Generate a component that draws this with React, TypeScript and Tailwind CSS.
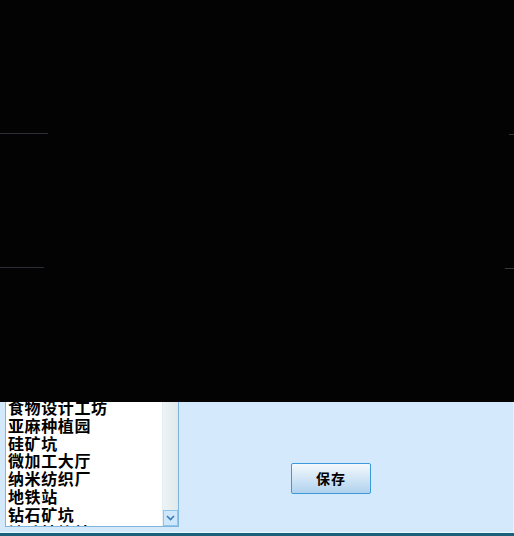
export default function App() {
  const items = [
    "食物设计工坊",
    "亚麻种植园",
    "硅矿坑",
    "微加工大厅",
    "纳米纺织厂",
    "地铁站",
    "钻石矿坑",
    "铀矿精炼站",
  ]

  return (
    <div className="w-[514px] h-[536px] overflow-hidden bg-black font-['SimSun','Noto_Sans_CJK_SC',sans-serif]">
      {/* dark viewport */}
      <div className="relative h-[402px] bg-[#030303]">
        <div className="absolute left-0 top-[133px] w-[48px] h-px bg-[#4a4a58]/60" />
        <div className="absolute left-0 top-[267px] w-[44px] h-px bg-[#4a4a58]/60" />
        <div className="absolute right-0 top-[134px] w-[5px] h-px bg-[#5a5a60]/60" />
        <div className="absolute right-0 top-[268px] w-[9px] h-px bg-[#5a5a60]/60" />
      </div>

      {/* bottom panel */}
      <div className="h-[134px] flex flex-col bg-[#d4eafc]">
        <div className="flex-1 flex pl-[5px] border-r border-[#e6f3fc]">
          <div className="w-[174px] h-[125px] flex border-x border-b border-[#7fb4dc] bg-white">
            <div className="flex-1 overflow-hidden">
              <ul className="-mt-[3px] pl-[2px] text-[16px] leading-[17.8px] tracking-[0.6px] font-bold text-black">
                {items.map((it) => (
                  <li key={it} className="whitespace-nowrap">{it}</li>
                ))}
              </ul>
            </div>
            <div className="w-[16px] flex flex-col border-l border-[#e2eef6] bg-gradient-to-r from-[#eef3f4] to-[#dfe9ec]">
              <div className="flex-1" />
              <div className="h-[16px] flex items-center justify-center border border-[#8ec6ec] bg-[#cfe7fa]">
                <svg width="9" height="6" viewBox="0 0 9 6">
                  <path d="M1 1 L4.5 4.5 L8 1" fill="none" stroke="#3a78b8" strokeWidth="1.6" />
                </svg>
              </div>
            </div>
          </div>
          <div className="flex-1 flex items-center pl-[112px] pt-[22px]">
            <button className="w-[80px] h-[31px] rounded-[2px] border border-[#3c9ad8] bg-gradient-to-b from-[#f4f9fc] to-[#b0d2ee] text-[14px] font-bold text-black tracking-[1px]">
              保存
            </button>
          </div>
        </div>
        <div className="h-px bg-[#e8f7fd]" />
        <div className="h-[3px] bg-[#1d5e78]" />
      </div>
    </div>
  )
}
